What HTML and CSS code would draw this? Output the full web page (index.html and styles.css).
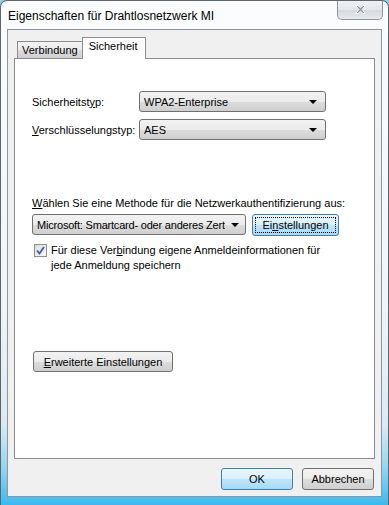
FILE: index.html
```html
<!DOCTYPE html>
<html lang="de">
<head>
  <meta charset="UTF-8" />
  <title>Eigenschaften für Drahtlosnetzwerk MI</title>
  <link rel="stylesheet" href="styles.css">
</head>
<body>
  <div class="window">
    <div class="titlebar">
      <span class="title">Eigenschaften für Drahtlosnetzwerk MI</span>
      <div class="close">
        <svg width="15" height="11" viewBox="0 0 15 11">
          <path d="M2.5 1.5 L5 1.5 L7.5 3.8 L10 1.5 L12.5 1.5 L9 5.5 L12.5 9.5 L10 9.5 L7.5 7.2 L5 9.5 L2.5 9.5 L6 5.5 Z" fill="#8c929a" stroke="#fff" stroke-width="1" stroke-linejoin="round"/>
        </svg>
      </div>
    </div>

    <div class="client">
      <div class="tabs">
        <div class="tab">Verbindung</div>
        <div class="tab active">Sicherheit</div>
      </div>

      <div class="pane">
        <div class="row">
          <span class="label">Sicherheitst<u>y</u>p:</span>
          <div class="select wide"><span>WPA2-Enterprise</span><i class="arrow"></i></div>
        </div>
        <div class="row">
          <span class="label"><u>V</u>erschlüsselungstyp:</span>
          <div class="select wide"><span>AES</span><i class="arrow"></i></div>
        </div>

        <p class="method"><u>W</u>ählen Sie eine Methode für die Netzwerkauthentifizierung aus:</p>
        <div class="method-row">
          <div class="select method-select"><span>Microsoft: Smartcard- oder anderes Zert</span><i class="arrow"></i></div>
          <button class="btn focused"><span class="focus-ring">Ei<u>n</u>stellungen</span></button>
        </div>

        <label class="check">
          <span class="box">
            <svg width="9" height="9" viewBox="0 0 9 9"><path d="M1 4.5 L3.5 7.5 L8 1" fill="none" stroke="#3a5fa8" stroke-width="1.8"/></svg>
          </span>
          <span>Für diese Ver<u>b</u>indung eigene Anmeldeinformationen für<br>jede Anmeldung speichern</span>
        </label>

        <button class="btn advanced"><u>E</u>rweiterte Einstellungen</button>
      </div>

      <div class="footer">
        <button class="btn default">OK</button>
        <button class="btn">Abbrechen</button>
      </div>
    </div>
  </div>
</body>
</html>
```

FILE: styles.css
```css
* {
  box-sizing: border-box;
}
body {
  margin: 0;
  width: 389px;
  height: 505px;
  background: #8fd3f0;
  font-family: "Segoe UI", "Liberation Sans", Arial, sans-serif;
  font-size: 11px;
  color: #000;
  overflow: hidden;
}
u {
  text-decoration: underline;
  text-underline-offset: 1px;
}
.window {
  width: 389px;
  height: 505px;
  display: flex;
  flex-direction: column;
  border: 1px solid #5d6670;
  border-bottom: none;
  border-radius: 7px 7px 0 0;
  background: linear-gradient(to bottom, #fbfcfd 0%, #f1f4f7 60%, #dbeaf2 84%, #8fd4f1 93%, #3cb9ec 100%);
  padding: 0 6px 8px 6px;
}
.titlebar {
  height: 28px;
  display: flex;
  align-items: flex-start;
  justify-content: space-between;
}
.title {
  font-size: 12px;
  padding: 8px 0 0 1px;
  color: #000;
}
.close {
  width: 46px;
  height: 19px;
  margin-right: -1px;
  border: 1px solid #8f969e;
  border-top: none;
  border-radius: 0 0 5px 5px;
  background: linear-gradient(to bottom, #eef1f4, #e2e6ea 50%, #d5dade 51%, #e4e8ec);
  display: flex;
  align-items: center;
  justify-content: center;
  padding-bottom: 1px;
}
.client {
  flex: 1;
  display: flex;
  flex-direction: column;
  border: 1px solid #8d969f;
  background: #f0f0f0;
  padding: 7px 6px 0 6px;
}
.tabs {
  display: flex;
  align-items: flex-end;
  height: 21px;
  padding-left: 3px;
}
.tab {
  height: 17px;
  padding: 2px 4px 0 4px;
  border: 1px solid #898c95;
  border-bottom: none;
  background: linear-gradient(to bottom, #f3f3f3, #ebebeb 50%, #dddddd 51%, #cfcfcf);
  margin-right: -1px;
}
.tab.active {
  position: relative;
  height: 22px;
  padding: 2px 7px 0 6px;
  background: #fff;
  margin-bottom: -1px;
  z-index: 1;
}
.pane {
  height: 401px;
  border: 1px solid #898c95;
  background: #fff;
  padding: 32px 0 0 17px;
  display: flex;
  flex-direction: column;
  align-items: flex-start;
}
.row {
  display: flex;
  align-items: center;
  margin-bottom: 7px;
}
.label {
  width: 107px;
}
.select {
  height: 21px;
  border: 1px solid #707070;
  border-radius: 3px;
  background: linear-gradient(to bottom, #f2f2f2, #ebebeb 50%, #dddddd 51%, #cfcfcf);
  display: flex;
  align-items: center;
  justify-content: space-between;
  padding: 0 8px 0 4px;
  white-space: nowrap;
  overflow: hidden;
}
.select span {
  overflow: hidden;
}
.select.wide {
  width: 187px;
}
.arrow {
  flex: none;
  width: 0;
  height: 0;
  border-left: 4px solid transparent;
  border-right: 4px solid transparent;
  border-top: 4px solid #000;
  margin-left: 6px;
}
.method {
  margin: 49px 0 3px 0;
  line-height: 15px;
}
.method-row {
  display: flex;
  gap: 6px;
}
.method-select {
  width: 214px;
  height: 21px;
  padding-right: 6px;
}
.method-select span {
  letter-spacing: -0.2px;
}
.btn {
  font: inherit;
  color: #000;
  height: 22px;
  border: 1px solid #707070;
  border-radius: 3px;
  background: linear-gradient(to bottom, #f2f2f2, #ebebeb 50%, #dddddd 51%, #cfcfcf);
  padding: 0 8px;
  cursor: pointer;
}
.btn.focused,
.btn.default {
  border-color: #3c7fb1;
  background: linear-gradient(to bottom, #eaf6fd, #d9f0fc 50%, #bee6fd 51%, #a7d9f5);
}
.focused {
  width: 87px;
  padding: 2px;
}
.focus-ring {
  display: flex;
  height: 100%;
  align-items: center;
  justify-content: center;
  border: 1px dotted #000;
}
.check {
  display: flex;
  align-items: flex-start;
  gap: 4px;
  margin: 7px 0 0 2px;
  line-height: 15px;
}
.box {
  flex: none;
  width: 13px;
  height: 13px;
  margin-top: 1px;
  border: 1px solid #8f8f8f;
  background: linear-gradient(135deg, #dcdcdc, #fbfbfb);
  display: flex;
  align-items: center;
  justify-content: center;
}
.advanced {
  margin: 78px 0 0 1px;
  width: 140px;
  height: 21px;
}
.footer {
  display: flex;
  justify-content: flex-end;
  gap: 9px;
  padding: 9px 1px 0 0;
}
.footer .btn {
  width: 72px;
  height: 22px;
}
```
